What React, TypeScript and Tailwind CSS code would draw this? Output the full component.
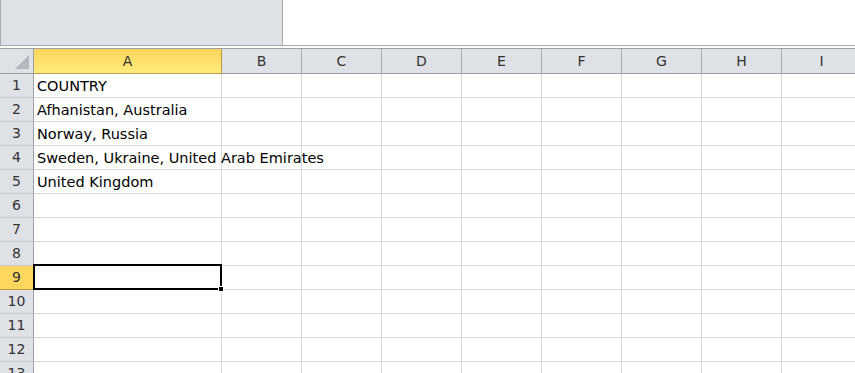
import React from "react";

const kolommen = [
  { naam: "A", breedte: "w-[188px]" },
  { naam: "B", breedte: "w-[80px]" },
  { naam: "C", breedte: "w-[80px]" },
  { naam: "D", breedte: "w-[80px]" },
  { naam: "E", breedte: "w-[80px]" },
  { naam: "F", breedte: "w-[80px]" },
  { naam: "G", breedte: "w-[80px]" },
  { naam: "H", breedte: "w-[80px]" },
  { naam: "I", breedte: "w-[80px]" },
];

const data: Record<number, string> = {
  1: "COUNTRY",
  2: "Afhanistan, Australia",
  3: "Norway, Russia",
  4: "Sweden, Ukraine, United Arab Emirates",
  5: "United Kingdom",
};

const rijen = Array.from({ length: 13 }, (_, i) => i + 1);
const actieveRij = 9;

export default function App() {
  return (
    <div
      className="h-[373px] w-[855px] overflow-hidden bg-white text-[#222]"
      style={{ fontFamily: '"DejaVu Sans", "Liberation Sans", sans-serif' }}
    >
      {/* Naamvak-balk */}
      <div className="flex h-[46px] border-b border-[#a5a9ae]">
        <div className="w-[283px] border-x border-[#a5a9ae] bg-[#dee1e6]" />
        <div className="flex-1 bg-white" />
      </div>
      <div className="h-[2px] bg-white" />

      {/* Kolomkoppen */}
      <div className="flex h-[26px] border-y border-[#9da1a7] bg-[#dee1e6]">
        <div className="relative w-[34px] shrink-0 border-r border-[#9da1a7]">
          <svg className="absolute left-[15px] top-[6px]" width="15" height="15" viewBox="0 0 15 15">
            <polygon points="14,0 14,14 0,14" fill="#b5b9bf" />
          </svg>
        </div>
        {kolommen.map((k, i) => (
          <div
            key={k.naam}
            className={`${k.breedte} flex shrink-0 items-center justify-center border-r text-[14px] text-[#333] ${
              i === 0
                ? "-mb-px border-b border-[#c39a45] bg-gradient-to-b from-[#ffd65a] to-[#ffeb7c]"
                : "border-[#a9adb2]"
            }`}
          >
            {k.naam}
          </div>
        ))}
      </div>

      {/* Rijen */}
      {rijen.map((r) => (
        <div key={r} className="flex h-[24px] shrink-0">
          <div
            className={`flex w-[34px] shrink-0 items-center justify-center border-r border-b text-[14px] text-[#333] ${
              r === actieveRij
                ? "border-r-[#c39a45] border-b-[#c39a45] bg-[#ffd75e]"
                : "border-r-[#9da1a7] border-b-[#c6cacf] bg-[#dee1e6]"
            }`}
          >
            {r}
          </div>
          {kolommen.map((k, i) => (
            <div
              key={k.naam}
              className={`${k.breedte} relative shrink-0 border-r border-b border-[#d9d9d9]`}
            >
              {i === 0 && data[r] && (
                <span className="absolute left-[3px] top-[3px] whitespace-nowrap text-[14.5px] leading-[18px] text-black">
                  {data[r]}
                </span>
              )}
              {i === 0 && r === actieveRij && (
                <div className="pointer-events-none absolute -left-[1px] -top-[2px] z-10 h-[26px] w-[189px] border-2 border-black">
                  <div className="absolute -bottom-[4px] -right-[4px] h-[6px] w-[6px] border border-white bg-black" />
                </div>
              )}
            </div>
          ))}
        </div>
      ))}
    </div>
  );
}
